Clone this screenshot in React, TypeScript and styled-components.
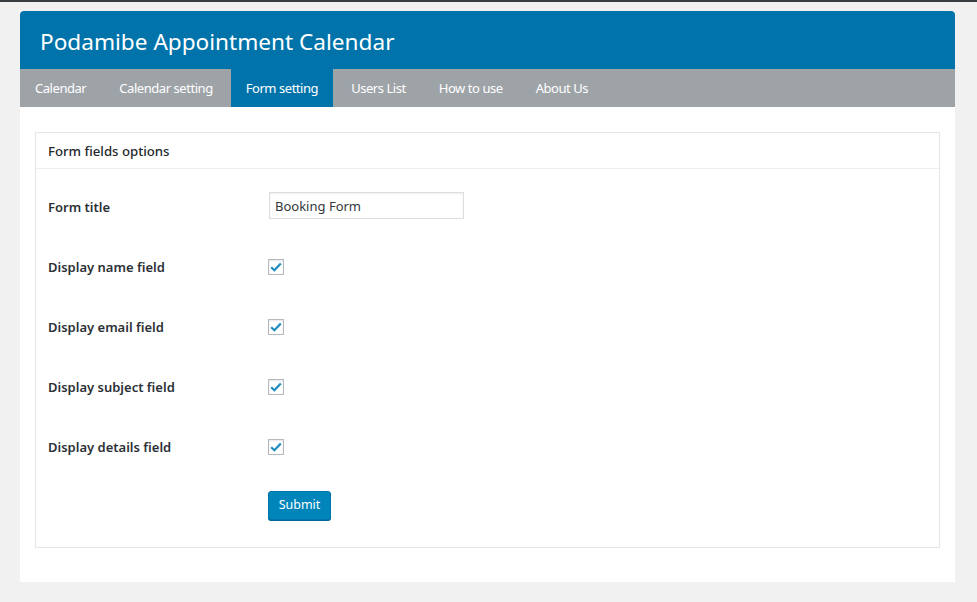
import React from "react";
import styled, { createGlobalStyle } from "styled-components";

const Global = createGlobalStyle`
  html, body { margin: 0; padding: 0; }
  body {
    background: #f1f1f1;
    font-family: "Noto Sans", "Open Sans", sans-serif;
    color: #23282d;
    border-top: 2px solid #3a3d40;
  }
`;

const Page = styled.div`
  padding: 9px 22px 0 20px;
  height: 600px;
  box-sizing: border-box;
`;

const Wrap = styled.div`
  width: 935px;
  background: #fff;
`;

const Header = styled.header`
  height: 58px;
  background: #0073aa;
  border-radius: 4px 4px 0 0;
  display: flex;
  align-items: center;
  padding-left: 20px;
`;

const Title = styled.h1`
  margin: 0;
  font-size: 22.6px;
  font-weight: 400;
  color: #fff;
  padding-top: 2px;
`;

const Nav = styled.nav`
  height: 38px;
  background: #9ea3a8;
  display: flex;
  align-items: stretch;
  gap: 3px;
`;

const Tab = styled.a<{ $active?: boolean }>`
  display: flex;
  align-items: center;
  padding: 0 15px;
  font-size: 13px;
  letter-spacing: -0.45px;
  color: #fff;
  text-decoration: none;
  background: ${(p) => (p.$active ? "#0073aa" : "transparent")};
`;

const Content = styled.div`
  padding: 25px 15px 34px 15px;
`;

const Panel = styled.section`
  border: 1px solid #e5e5e5;
`;

const PanelHead = styled.div`
  height: 35px;
  border-bottom: 1px solid #eee;
  display: flex;
  align-items: center;
  padding-left: 12px;
  font-size: 13.2px;
  font-weight: 500;
  color: #23282d;
`;

const PanelBody = styled.div`
  padding: 8px 12px 27px 12px;
`;

const Row = styled.div`
  height: 60px;
  display: grid;
  grid-template-columns: 220px 1fr;
  align-items: center;
`;

const Label = styled.label`
  font-size: 13px;
  font-weight: 600;
  color: #2c3136;
`;

const Input = styled.input`
  width: 195px;
  height: 27px;
  box-sizing: border-box;
  border: 1px solid #ddd;
  box-shadow: inset 0 1px 2px rgba(0, 0, 0, 0.07);
  padding: 0 5px;
  font-family: inherit;
  font-size: 13px;
  color: #32373c;
  margin: 0 0 3px 1px;
  outline: none;
`;

const Check = styled.span`
  width: 16px;
  height: 16px;
  box-sizing: border-box;
  border: 1px solid #b4b9be;
  background: #fff;
  box-shadow: inset 0 1px 2px rgba(0, 0, 0, 0.1);
  display: flex;
  align-items: center;
  justify-content: center;
`;

const ButtonRow = styled.div`
  padding: 14px 0 0 220px;
`;

const Button = styled.button`
  width: 63px;
  height: 29px;
  background: #0085ba;
  border: 1px solid #0073aa;
  border-radius: 3px;
  box-shadow: 0 1px 0 #006799;
  color: #fff;
  font-family: inherit;
  font-size: 12.5px;
  padding: 0 0 2px 0;
  cursor: pointer;
`;

const CheckMark = () => (
  <svg width="12" height="10" viewBox="0 0 12 10">
    <path d="M1.2 5.2 L4.4 8.2 L10.8 1.4" fill="none" stroke="#1e8cbe" strokeWidth="2.2" />
  </svg>
);

const tabs = ["Calendar", "Calendar setting", "Form setting", "Users List", "How to use", "About Us"];
const checks = ["Display name field", "Display email field", "Display subject field", "Display details field"];

export default function App() {
  return (
    <>
      <Global />
      <Page>
        <Wrap>
          <Header>
            <Title>Podamibe Appointment Calendar</Title>
          </Header>
          <Nav>
            {tabs.map((t) => (
              <Tab key={t} $active={t === "Form setting"}>
                {t}
              </Tab>
            ))}
          </Nav>
          <Content>
            <Panel>
              <PanelHead>Form fields options</PanelHead>
              <PanelBody>
                <Row>
                  <Label>Form title</Label>
                  <Input defaultValue="Booking Form" />
                </Row>
                {checks.map((c) => (
                  <Row key={c}>
                    <Label>{c}</Label>
                    <Check>
                      <CheckMark />
                    </Check>
                  </Row>
                ))}
                <ButtonRow>
                  <Button>Submit</Button>
                </ButtonRow>
              </PanelBody>
            </Panel>
          </Content>
        </Wrap>
      </Page>
    </>
  );
}
